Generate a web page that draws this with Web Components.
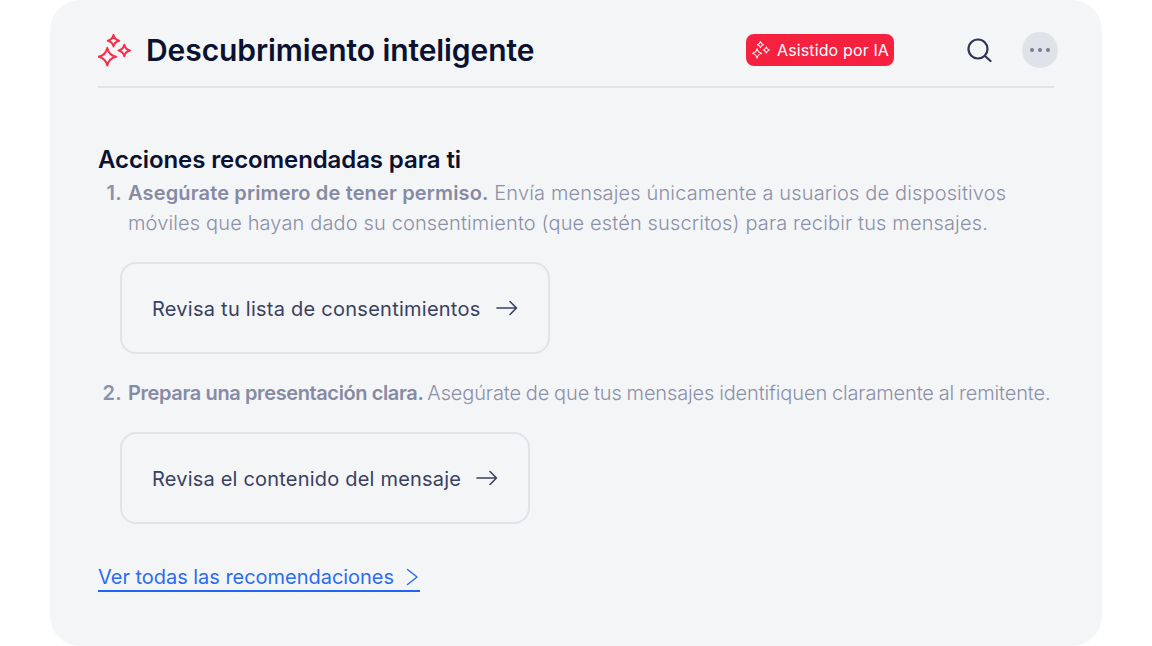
<!DOCTYPE html>
<html lang="es">
<head>
<meta charset="utf-8">
<title>Descubrimiento inteligente</title>
<style>
  html, body { margin: 0; background: #fff; }
  body { font-family: "Inter", "Noto Sans", sans-serif; }
</style>
</head>
<body>
<insight-card>
  <card-header slot="header" title-text="Descubrimiento inteligente" badge="Asistido por IA"></card-header>
  <h2-title>Acciones recomendadas para ti</h2-title>
  <rec-step number="1."><b>Asegúrate primero de tener permiso.</b> Envía mensajes únicamente a usuarios de dispositivos<br>móviles que hayan dado su consentimiento (que estén suscritos) para recibir tus mensajes.</rec-step>
  <action-box>Revisa tu lista de consentimientos</action-box>
  <rec-step number="2." tight><b>Prepara una presentación clara.</b> Asegúrate de que tus mensajes identifiquen claramente al remitente.</rec-step>
  <action-box style="letter-spacing: 0.2px">Revisa el contenido del mensaje</action-box>
  <more-link>Ver todas las recomendaciones</more-link>
</insight-card>

<script>
const sparkle = (cx, cy, r) => {
  const k = r * 0.18;
  return `M${cx} ${cy - r}Q${cx + k} ${cy - k} ${cx + r} ${cy}Q${cx + k} ${cy + k} ${cx} ${cy + r}Q${cx - k} ${cy + k} ${cx - r} ${cy}Q${cx - k} ${cy - k} ${cx} ${cy - r}Z`;
};
const sparkles = (size, color, sw) => `
  <svg width="${size}" height="${size}" viewBox="0 0 32 32" fill="none" stroke="${color}" stroke-width="${sw}" stroke-linejoin="round">
    <path d="${sparkle(9, 22, 8.5)}"/><path d="${sparkle(15, 6.5, 5.5)}"/><path d="${sparkle(25.5, 16, 5.5)}"/>
  </svg>`;

class InsightCard extends HTMLElement {
  constructor() {
    super();
    this.attachShadow({mode: 'open'}).innerHTML = `
      <style>
        :host {
          display: block;
          box-sizing: border-box;
          width: 1052px;
          height: 646px;
          margin: 0 50px;
          padding: 0 48px;
          background: #f3f5f7;
          border-radius: 30px;
        }
      </style>
      <slot name="header"></slot>
      <slot></slot>
    `;
  }
}

class CardHeader extends HTMLElement {
  constructor() {
    super();
    this.attachShadow({mode: 'open'});
  }
  connectedCallback() {
    this.shadowRoot.innerHTML = `
      <style>
        :host {
          display: flex;
          align-items: center;
          width: 956px;
          height: 72px;
          padding-top: 14px;
          border-bottom: 2px solid #e0e3e8;
        }
        .logo { display: flex; margin-right: 15px; }
        h1 {
          margin: 0 0 1px;
          flex: 1;
          font: 600 30px/36px "Inter", sans-serif;
          letter-spacing: -0.08px;
          color: #0b1130;
        }
        .badge {
          display: flex;
          align-items: center;
          gap: 7px;
          box-sizing: border-box;
          width: 148px;
          height: 32px;
          padding-left: 6px;
          background: #f6203f;
          border-radius: 8px;
          color: #fff;
          font: 400 16px/20px "Inter", sans-serif;
          letter-spacing: 0.13px;
        }
        .search { display: flex; margin-left: 72px; margin-right: 30px; }
        .more {
          width: 36px;
          height: 36px;
          margin-right: -4px;
          border-radius: 50%;
          background: #dfe2e8;
          display: flex;
          align-items: center;
          justify-content: center;
          gap: 4px;
        }
        .more i { width: 4px; height: 4px; border-radius: 50%; background: #777b94; }
      </style>
      <span class="logo">${sparkles(33, '#f6304a', 2)}</span>
      <h1>${this.getAttribute('title-text')}</h1>
      <span class="badge">${sparkles(18, '#fff', 1.8)}<span>${this.getAttribute('badge')}</span></span>
      <span class="search">
        <svg width="26" height="26" viewBox="0 0 26 26" fill="none" stroke="#2f3554" stroke-width="2.200" stroke-linecap="round"><circle cx="12" cy="12" r="9.500"/><path d="M19 19l5.500 5"/></svg>
      </span>
      <span class="more"><i></i><i></i><i></i></span>
    `;
  }
}

class H2Title extends HTMLElement {
  constructor() {
    super();
    this.attachShadow({mode: 'open'}).innerHTML = `
      <style>
        :host {
          display: block;
          margin: 56px 0 2px;
          font: 600 24px/32px "Inter", sans-serif;
          letter-spacing: -0.1px;
          color: #0b1130;
        }
      </style>
      <slot></slot>
    `;
  }
}

class RecStep extends HTMLElement {
  constructor() {
    super();
    this.attachShadow({mode: 'open'});
  }
  connectedCallback() {
    this.shadowRoot.innerHTML = `
      <style>
        :host {
          display: grid;
          grid-template-columns: 30px 1fr;
          font: 300 20px/30px "Inter", sans-serif;
          letter-spacing: 0.14px;
          color: #8c90a8;
          white-space: nowrap;
        }
        :host([tight]) { letter-spacing: -0.13px; word-spacing: -0.6px; }
        :host([tight]) ::slotted(b) { letter-spacing: -0.39px; word-spacing: 0; margin-right: -1px; }
        .num { font-weight: 600; text-align: right; padding-right: 6px; letter-spacing: 0.3px; }
        ::slotted(b) { font-weight: 600; color: #868aa3; }
      </style>
      <span class="num">${this.getAttribute('number')}</span>
      <div><slot></slot></div>
    `;
  }
}

class ActionBox extends HTMLElement {
  constructor() {
    super();
    this.attachShadow({mode: 'open'}).innerHTML = `
      <style>
        :host {
          display: flex;
          width: fit-content;
          box-sizing: border-box;
          height: 92px;
          align-items: center;
          gap: 15px;
          margin: 24px 0 24px 22px;
          padding: 0 30px;
          border: 2px solid #e0e3e8;
          border-radius: 16px;
          font: 400 20px/24px "Inter", sans-serif;
          letter-spacing: 0.25px;
          color: #3a4060;
        }
        .label { padding-top: 2px; }
        svg { display: block; }
      </style>
      <span class="label"><slot></slot></span>
      <svg width="22" height="16" viewBox="0 0 22 16" fill="none" stroke="#3a4060" stroke-width="1.600" stroke-linecap="round" stroke-linejoin="round"><path d="M1 8h19.500M14 1.500L20.500 8 14 14.500"/></svg>
    `;
  }
}

class MoreLink extends HTMLElement {
  constructor() {
    super();
    this.attachShadow({mode: 'open'}).innerHTML = `
      <style>
        :host {
          display: flex;
          width: fit-content;
          align-items: center;
          gap: 11px;
          margin-top: 40px;
          border-bottom: 2px solid #1f64f2;
          font: 400 20px/26px "Inter", sans-serif;
          letter-spacing: -0.03px;
          color: #2b6cf0;
        }
      </style>
      <slot></slot>
      <svg width="15" height="20" viewBox="0 0 15 20" fill="none" stroke="#2b6cf0" stroke-width="1.500" stroke-linecap="round" stroke-linejoin="round"><path d="M2.500 2.500l9.500 7.500-9.500 7.500"/></svg>
    `;
  }
}

customElements.define('insight-card', InsightCard);
customElements.define('card-header', CardHeader);
customElements.define('h2-title', H2Title);
customElements.define('rec-step', RecStep);
customElements.define('action-box', ActionBox);
customElements.define('more-link', MoreLink);
</script>
</body>
</html>
